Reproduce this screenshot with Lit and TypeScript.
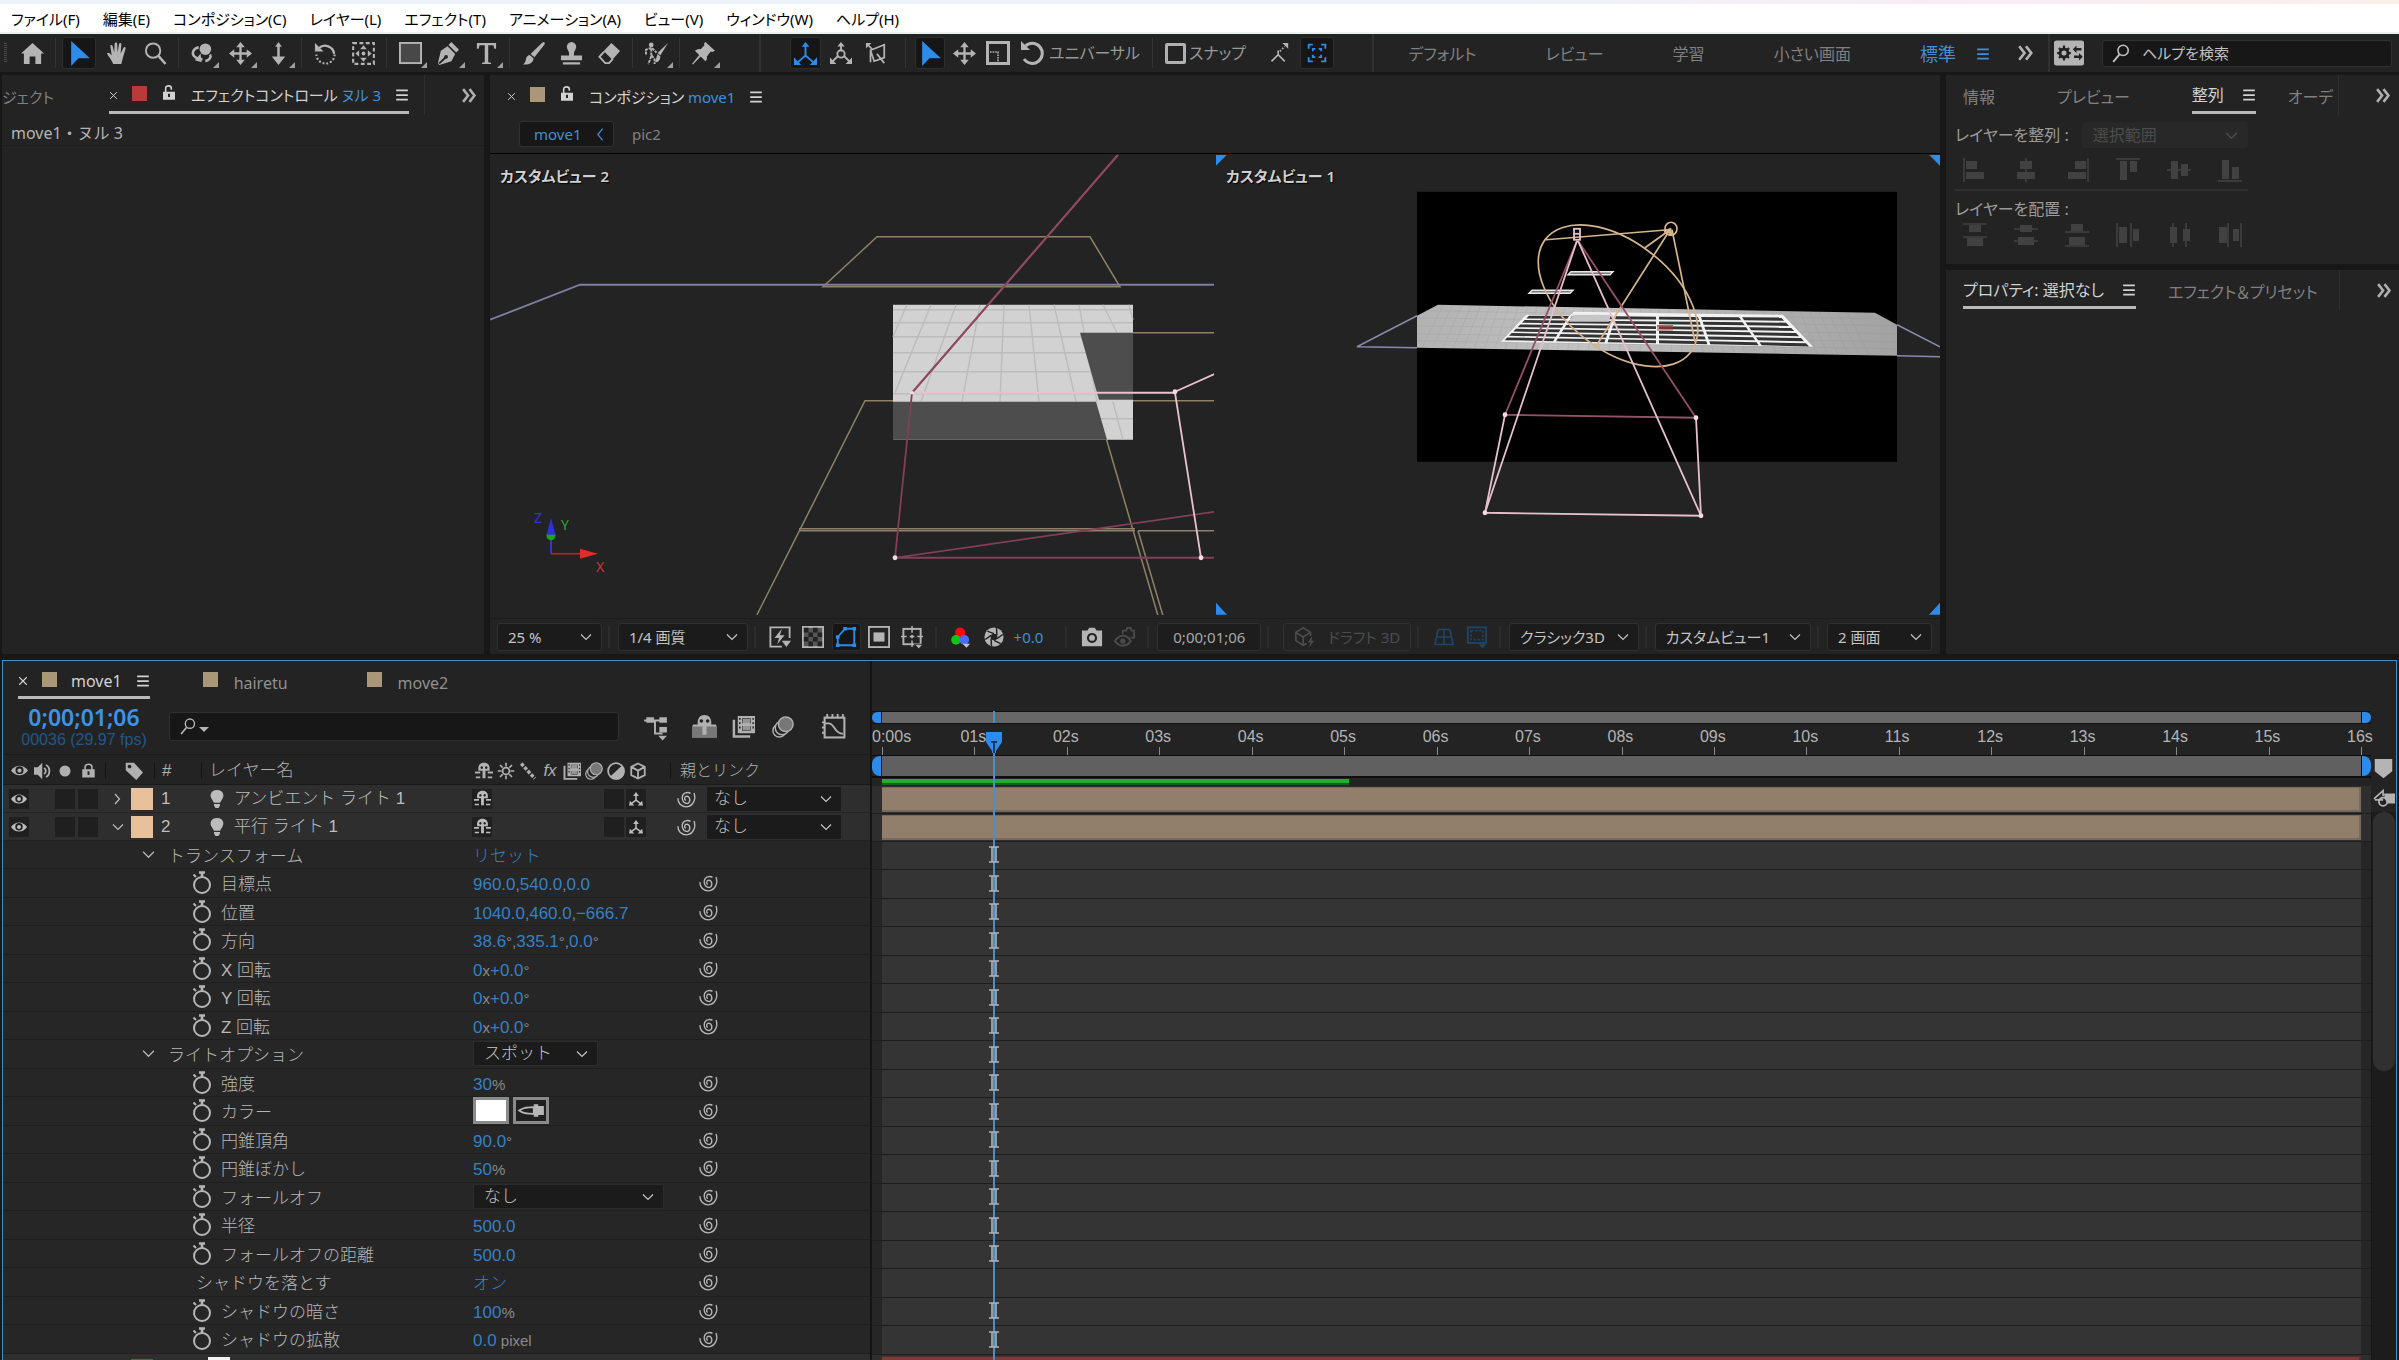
import { LitElement, html, svg, css, nothing } from "lit";
import { customElement } from "lit/decorators.js";
import { classMap } from "lit/directives/class-map.js";
import { styleMap } from "lit/directives/style-map.js";

/* ---------- icons, all drawn on a 24 x 24 grid ---------- */

const icons: Record<string, unknown> = {
  home: svg`<path fill="currentColor" d="M12 1 0 12h3v11h6v-8h6v8h6V12h3z"/>`,
  arrow: svg`<path fill="currentColor" d="M4 0v24l7-7.500h11z"/>`,
  hand: svg`<path fill="currentColor" d="M7.500 23C6 19 2 14 1 12c1-1.600 3-.6 5 2L4.500 4.500c0-2 2-2 2.500 0L8.500 11 9 2c0-2 2.600-2 2.700 0L12 11l1.600-9c.5-1.700 2.600-1.300 2.400.6L15.300 12l2.900-6c1-1.500 2.600-.7 2.200 1L17.500 17l-1.500 6z"/>`,
  zoom: svg`<circle cx="9.500" cy="9" r="7.500" fill="none" stroke="currentColor" stroke-width="2"/><path d="m15 14.500 7.500 8.500" stroke="currentColor" stroke-width="2.600"/>`,
  orbit: svg`<circle cx="15" cy="7.500" r="6" fill="currentColor"/><path d="M8 5.500C2 7 0 12 4 15.500c2 1.800 5 2.500 8 2.500M20 13c1.500 3-1 6-5 7" fill="none" stroke="currentColor" stroke-width="2.600"/><path d="m10 12 1 9-7-2z" fill="currentColor"/>`,
  pan: svg`<path d="M12 3v18M3 12h18" stroke="currentColor" stroke-width="2.400"/><path fill="currentColor" d="m12 0 4.500 5.500h-9zM12 24l4.500-5.500h-9zM0 12l5.500-4.500v9zM24 12l-5.500-4.500v9z"/>`,
  dolly: svg`<path d="M12 4v14" stroke="currentColor" stroke-width="2.600"/><path fill="currentColor" d="m12 0 3.500 5h-7zM12 24l7-9H5z"/>`,
  rotate: svg`<path d="M5 6.500a9.500 9.500 0 0 1 16 6" fill="none" stroke="currentColor" stroke-width="2.400"/><path d="M21.500 13a9.500 9.500 0 0 1-19 0" fill="none" stroke="currentColor" stroke-width="2.200" stroke-dasharray="2 2"/><path d="M1 1v9h9z" fill="currentColor"/>`,
  anchor: svg`<rect x="1.200" y="1.200" width="21.600" height="21.600" fill="none" stroke="currentColor" stroke-width="2.200" stroke-dasharray="4 2.600"/><circle cx="12" cy="12" r="2" fill="currentColor"/><path fill="currentColor" d="m12 3.500 3.500 4h-7zM12 20.500l3.500-4h-7zM3.500 12l4-3.500v7zM20.500 12l-4-3.500v7z"/>`,
  rect: svg`<rect x="1" y="1" width="22" height="21" fill="#484848" stroke="currentColor" stroke-width="2"/>`,
  pen: svg`<path fill="currentColor" fill-rule="evenodd" d="m15 0 8 8-3 3-8-8zM11 4.500l8 8-4 7.500L2.500 24 1 22.500l6.500-6.500a2 2 0 1 1 1.500 1.500L3 23 1 22 4 9z"/>`,
  type: svg`<path fill="currentColor" d="M2 1h20v6h-1.800l-1-3.500h-5.400V21l3 .6V23H7.200v-1.400l3-.6V3.500H4.800l-1 3.500H2z"/>`,
  brush: svg`<path fill="currentColor" d="M23 0c1 1 1 1.500.5 2.500L13 16l-4-3.500L21 .8zM8 13.500l4 3.500c0 5-5 7-11 6.500 3-2 2.500-4 3.500-7 .8-1.800 2-2.700 3.500-3z"/>`,
  stamp: svg`<path fill="currentColor" d="M12 0a5 5 0 0 1 4 8c-1.500 2-1.500 4-1.500 6H23v5H1v-5h8.500c0-2 0-4-1.500-6a5 5 0 0 1 4-8zM3 21h18v2.500H3z"/>`,
  eraser: svg`<path fill="currentColor" d="m14 1 9 8.500-8 9L6 9.500z"/><path d="m6.500 10-5 5.500 6 6.500h4l4-4.500" fill="none" stroke="currentColor" stroke-width="2"/>`,
  roto: svg`<circle cx="6.500" cy="3" r="2.500" fill="currentColor"/><path d="M1 13V8l6-2 5 5M6.500 7v8l-3 8M7 14l3 4v5" fill="none" stroke="currentColor" stroke-width="2" stroke-dasharray="3 1"/><path fill="currentColor" d="M24 1 16 14l-3-2.500zM13 12.500l3 2.500c0 4-2 6-5.500 6z"/>`,
  pin: svg`<path fill="currentColor" d="m14 0 10 9-3 1.500-1.500-.5-4 5c.5 2 0 3.500-1.500 5L9 15l-8 8.500L0 23l7.500-9.500L3 9c2-1.500 4-2 6-1.500l4-4-.5-2z"/>`,
  axisLocal: svg`<path d="M12 3v11M12 14l-8 7M12 14l8 7" stroke="currentColor" stroke-width="2" fill="none"/><path fill="currentColor" d="m12 0 4 5H8zM0 24v-8l7.500 8zM24 24v-8l-7.500 8z"/>`,
  axisWorld: svg`<path d="M12 3v7M9 15l-6 6M15 15l6 6" stroke="currentColor" stroke-width="2"/><circle cx="12" cy="13" r="4" fill="none" stroke="currentColor" stroke-width="2"/><path fill="currentColor" d="m12 0 4 5H8zM0 24v-7l7 7zM24 24v-7l-7 7z"/>`,
  axisView: svg`<path d="M3 3l5 5M6 9l15-6v14L10 21zM6 9v13M13 13l8 10" stroke="currentColor" stroke-width="1.900" fill="none"/><path fill="currentColor" d="M1 1v6l6-6z"/>`,
  scale: svg`<rect x="1.500" y="1.500" width="21" height="21" fill="none" stroke="currentColor" stroke-width="3"/><path d="M4 11h8v10" fill="none" stroke="currentColor" stroke-width="1.600" stroke-dasharray="1.600 1"/>`,
  undo: svg`<path d="M5 5.500A10 10 0 1 1 4 18" fill="none" stroke="currentColor" stroke-width="3"/><path d="M1 0v9h9z" fill="currentColor"/>`,
  snapArrow: svg`<path d="m3 22 8-8 8 8M11 14V9" fill="none" stroke="currentColor" stroke-width="2"/><path d="m13 10 6-6" stroke="currentColor" stroke-width="2" stroke-dasharray="2 2"/><path fill="currentColor" d="M23 0v7l-7-7z"/>`,
  feature: svg`<path d="M2 7V2h5M17 2h5v5M22 17v5h-5M7 22H2v-5M7 10V7h3M14 7h3v3M17 14v3h-3M10 17H7v-3" fill="none" stroke="currentColor" stroke-width="2.200"/>`,
  lockOpen: svg`<path d="M7 12V5c0-5 8.500-5 8.500 0v2" fill="none" stroke="currentColor" stroke-width="2.400"/><path fill="currentColor" fill-rule="evenodd" d="M3 10h18v12H3zm7.500 3h3v5h-3z"/>`,
  lock: svg`<path d="M6.500 11V6.500c0-6 11-6 11 0V11" fill="none" stroke="currentColor" stroke-width="2.600"/><path fill="currentColor" fill-rule="evenodd" d="M2 10h20v13H2zm8.500 3h3v6h-3z"/>`,
  menu: svg`<path d="M2 4h20M2 12h20M2 20h20" stroke="currentColor" stroke-width="3"/>`,
  more: svg`<path d="m3 3 7 9-7 9M12 3l7 9-7 9" fill="none" stroke="currentColor" stroke-width="3.600"/>`,
  chevDown: svg`<path d="m2 7 10 10L22 7" fill="none" stroke="currentColor" stroke-width="2.400"/>`,
  chevRight: svg`<path d="m6 2 9 10-9 10" fill="none" stroke="currentColor" stroke-width="2.400"/>`,
  chevLeft: svg`<path d="m16 1-9 11 9 11" fill="none" stroke="currentColor" stroke-width="2.200"/>`,
  close: svg`<path d="m3 3 18 18M21 3 3 21" stroke="currentColor" stroke-width="2.600"/>`,
  settings: svg`<rect x="0" y="2" width="24" height="20" rx="2" fill="currentColor"/><circle cx="8" cy="12" r="3.200" fill="none" stroke="#232323" stroke-width="2.400"/><path d="M8 6v2M8 16v2M2.500 12h2M11.500 12h2M4 8l1.500 1.500M10.500 14.500 12 16M12 8l-1.500 1.500M5.500 14.500 4 16" stroke="#232323" stroke-width="1.800"/><path d="M16 9h6M16 15h6" stroke="#232323" stroke-width="2"/><path d="m18 6-3 3 3 3zM20 12l3 3-3 3z" fill="#232323"/>`,
  find: svg`<circle cx="14" cy="8" r="6.500" fill="none" stroke="currentColor" stroke-width="2"/><path d="m9.500 13-8 9.500" stroke="currentColor" stroke-width="2.400"/>`,
  flash: svg`<path d="M14 22.500H1.500v-21h21V13" fill="none" stroke="currentColor" stroke-width="2"/><path d="m14 3-8 10h5l-2 7 8-10h-5z" fill="currentColor"/><path d="M14 16h10l-5 7z" fill="currentColor"/>`,
  checker: svg`<rect x="1" y="1" width="22" height="22" fill="#555" stroke="currentColor" stroke-width="2"/><path fill="#222" d="M2 2h5v5H2zM12 2h5v5h-5zM7 7h5v5H7zM17 7h5v5h-5zM2 12h5v5H2zM12 12h5v5h-5zM7 17h5v5H7zM17 17h5v5h-5z"/>`,
  mask: svg`<path d="M3 21V12l8-9h10v18z" fill="none" stroke="currentColor" stroke-width="2"/><path fill="currentColor" d="M1 19h4v4H1zM19 19h4v4h-4zM19 1h4v4h-4zM9 1h4v4H9zM1 10h4v4H1z"/>`,
  solid: svg`<rect x="1" y="1" width="22" height="22" fill="none" stroke="currentColor" stroke-width="2"/><rect x="6" y="7" width="12" height="10" fill="currentColor"/>`,
  guides: svg`<rect x="2.500" y="3" width="18" height="16" fill="none" stroke="currentColor" stroke-width="2"/><path d="M11.500 0v7M11.500 15v7M0 11h6M17 11h6M9 11h5M11.500 9v4" stroke="currentColor" stroke-width="1.600"/><path fill="currentColor" d="M14 19h9l-4.500 5z" stroke="#232323"/>`,
  rgb: svg`<circle cx="11" cy="6.500" r="6" fill="#f60a0a"/><circle cx="6" cy="15.500" r="5.800" fill="#14c414"/><circle cx="16" cy="15.500" r="5.800" fill="#4a6cf5"/><path fill="#c4c4c4" d="M14 20h9l-4.500 5z"/>`,
  aperture: svg`<circle cx="12" cy="12" r="11.500" fill="currentColor"/><circle cx="12" cy="12" r="4" fill="#232323"/><path d="M12 8 4 5M15.500 10 15 1M15.500 14l7-5M12 16l8 4M8.500 14 9 23M8.500 10l-7 5" stroke="#232323" stroke-width="1.800"/>`,
  camera: svg`<path fill="currentColor" fill-rule="evenodd" d="M1 5h6l2-3h6l2 3h6v17H1zm11 2.500a5.500 5.500 0 1 0 .01 0z"/><circle cx="12" cy="13" r="3.200" fill="currentColor"/>`,
  snapEye: svg`<path d="M1 16c5-8 14-8 18 0-4 7-13 7-18 0z" fill="none" stroke="currentColor" stroke-width="2.400"/><circle cx="10" cy="16" r="3" fill="currentColor"/><path d="M10 8V4h4l1-3h4l1 3h3v8h-4" fill="none" stroke="currentColor" stroke-width="2"/>`,
  cubeFlash: svg`<path d="M14 19 10 21 2 16V7l8-5 8 5v4M2 7l8 5 8-5M10 12v9" fill="none" stroke="currentColor" stroke-width="1.800"/><path d="m20 11-5 7h3l-2 6 6-8h-3z" fill="currentColor"/>`,
  gridPersp: svg`<path d="M5 3h14l4 18H1zM3 12h18M12 3v18" fill="none" stroke="currentColor" stroke-width="2"/>`,
  dashBox: svg`<rect x="2" y="1.500" width="20" height="17" fill="none" stroke="currentColor" stroke-width="2"/><rect x="5.500" y="5" width="13" height="10" fill="none" stroke="currentColor" stroke-width="1.800" stroke-dasharray="2.400 2"/><path fill="currentColor" d="M14 20h8l-4 4.500z"/>`,
  eye: svg`<path d="M0 12C6 3 18 3 24 12 18 21 6 21 0 12z" fill="currentColor"/><circle cx="12" cy="11.500" r="5.600" fill="#1f1f1f"/><circle cx="12" cy="12" r="3" fill="currentColor"/>`,
  speaker: svg`<path fill="currentColor" d="M0 7h5l6-6v22l-6-6H0z"/><path d="M13.500 8c3 2 3 6 0 8M16 4c6 3 6 13 0 16" fill="none" stroke="currentColor" stroke-width="2.400"/>`,
  dot: svg`<circle cx="12" cy="12" r="11" fill="currentColor"/>`,
  tag: svg`<path fill="currentColor" fill-rule="evenodd" d="M1 1h11l12 13-9 10L1 11zm5 2.500a2.500 2.500 0 1 0 .01 0z"/>`,
  bulb: svg`<path fill="currentColor" d="M12 0c9 0 10 8 7 12l-3 5H8l-3-5C2 8 3 0 12 0zM8 18.500h8v2l-2 3.500h-4l-2-3.500z"/>`,
  shy: svg`<path fill="currentColor" fill-rule="evenodd" d="M4.500 11.500C3.500 4 7 1 12 1s8.500 3 7.500 10.500h-5.500v10h-4v-10zM9 5.800a1.700 1.700 0 1 0 .01 0zm6 0a1.700 1.700 0 1 0 .01 0z"/><path d="M0 14h7M17 14h7M1 20.500h6M17 20.500h6" stroke="currentColor" stroke-width="2.400"/>`,
  shyBig: svg`<path fill="#777" d="M0 11h24v12H0z"/><path fill="currentColor" fill-rule="evenodd" d="M5.500 10C5 4 8 1 12 1s7 3 6.500 9H23v2h-9v8h-4v-8H1v-2zM9 5a1.700 1.700 0 1 0 .01 0zm6 0a1.700 1.700 0 1 0 .01 0z"/>`,
  sun: svg`<circle cx="12" cy="12" r="4.600" fill="none" stroke="currentColor" stroke-width="2.400"/><path d="M12 1v5M12 18v5M1 12h5M18 12h5M4 4l3.500 3.500M16.500 16.500 20 20M20 4l-3.500 3.500M7.500 16.500 4 20" stroke="currentColor" stroke-width="2.200"/>`,
  quality: svg`<path d="m3 2 18 20" stroke="currentColor" stroke-width="4.500" stroke-dasharray="4.500 2"/>`,
  frames: svg`<path fill="currentColor" fill-rule="evenodd" d="M6 1h18v18H6zm4.500 2.500v5h9v-5zm0 8v5h9v-5zM7.300 3v2h1.600V3zm0 4.500v2h1.600v-2zm0 4.500v2h1.600v-2zm14-9v2h1.500V3zm0 4.500v2h1.500v-2zm0 4.500v2h1.500v-2z"/><path d="M2 5v17.500h17" fill="none" stroke="currentColor" stroke-width="2.600"/><path fill="currentColor" d="M11 4h8v12h-8z" opacity=".8"/>`,
  blur: svg`<circle cx="8" cy="16" r="7" fill="#232323" stroke="currentColor" stroke-width="1.600"/><circle cx="11" cy="13" r="7.500" fill="#232323" stroke="currentColor" stroke-width="1.600"/><circle cx="15" cy="9" r="8" fill="#777" stroke="currentColor" stroke-width="1.600"/>`,
  adjust: svg`<circle cx="12" cy="12" r="10.500" fill="none" stroke="currentColor" stroke-width="2.400"/><path fill="currentColor" d="M20 4.500A11 11 0 1 1 4 19.500z"/>`,
  cube: svg`<path d="m12 2 9 4.500v11L12 22l-9-4.500v-11zM3 6.500l9 5 9-5M12 11.500V22" fill="none" stroke="currentColor" stroke-width="2.400"/>`,
  axisSmall: svg`<path d="M12 4v10M12 14l-8 6M12 14l8 6" stroke="currentColor" stroke-width="2.600" fill="none"/><path fill="currentColor" d="m12 0 5 7H7zM0 23l1.500-8L9 23zM24 23l-1.500-8L15 23z"/>`,
  tree: svg`<path d="M2 6h18M12 6v12h7" fill="none" stroke="currentColor" stroke-width="1.800"/><path fill="currentColor" d="M4 3h7v5H4zM16 3h7v5h-7zM16 12h7v5h-7zM15 20h8l-4 4.500z"/>`,
  graph: svg`<rect x="2.500" y="3.500" width="19" height="19" fill="none" stroke="currentColor" stroke-width="2"/><path d="M3 9h3c7 0 5 10 14 10M5 4V0M10 4V0M15 4V0M20 4V0M3 8H0M3 13H0M3 18H0" fill="none" stroke="currentColor" stroke-width="1.800"/>`,
  stopwatch: svg`<circle cx="12" cy="14" r="8" fill="none" stroke="currentColor" stroke-width="2"/><path d="M9 1.500h6M12 1.500V6" stroke="currentColor" stroke-width="2.600"/><path d="M3.500 3.500l2.500 2.500" stroke="currentColor" stroke-width="2"/>`,
  spiral: svg`<path d="M11 14.500A3 3 0 0 1 12.500 9a5 5 0 0 1 .5 9.500A7.300 7.300 0 0 1 10.500 4.800" fill="none" stroke="currentColor" stroke-width="1.700"/><path d="M10.500 4.800c3-.8 5-.5 6.500.7M21.500 5c3 8-1.500 17-9.500 17.500C5 22.500 1 17.500 1.200 11.500" fill="none" stroke="currentColor" stroke-width="1.700"/>`,
  dropper: svg`<path d="M1 12c4-3 8-3 13-3v6c-5 0-9 0-13-3z" fill="none" stroke="currentColor" stroke-width="1.500"/><path fill="currentColor" d="M14 6.500h4V8h5v8h-5v1.500h-4z"/>`,
  marker: svg`<path fill="currentColor" d="M2 1h20v14l-10 8-10-8z"/>`,
  keyNav: svg`<path d="m1 13 10-9v6M2 14h9" fill="none" stroke="currentColor" stroke-width="1.800"/><circle cx="11" cy="16" r="4.500" fill="none" stroke="currentColor" stroke-width="2"/><path fill="currentColor" d="M12 7h12v11h-8l-3-5z"/>`,
  alL: svg`<path d="M1 0v24" stroke="currentColor" stroke-width="1.600"/><path fill="currentColor" d="M3 3h11v8H3zM3 14h18v7H3z"/>`,
  alC: svg`<path d="M12 0v24" stroke="currentColor" stroke-width="1.600"/><path fill="currentColor" d="M6 3h12v8H6zM3 14h18v7H3z"/>`,
  alR: svg`<path d="M23 0v24" stroke="currentColor" stroke-width="1.600"/><path fill="currentColor" d="M10 3h11v8H10zM3 14h18v7H3z"/>`,
  alT: svg`<path d="M0 1h24" stroke="currentColor" stroke-width="1.600"/><path fill="currentColor" d="M4 3h7v19H4zM14 3h7v11h-7z"/>`,
  alM: svg`<path d="M0 12h24" stroke="currentColor" stroke-width="1.600"/><path fill="currentColor" d="M4 3h7v18H4zM14 6h7v12h-7z"/>`,
  alB: svg`<path d="M0 23h24" stroke="currentColor" stroke-width="1.600"/><path fill="currentColor" d="M4 2h7v19H4zM14 9h7v12h-7z"/>`,
  dsT: svg`<path d="M0 1h24M0 14h24" stroke="currentColor" stroke-width="1.600"/><path fill="currentColor" d="M6 2h12v7H6zM4 15h16v8H4z"/>`,
  dsM: svg`<path d="M0 6h24M0 18h24" stroke="currentColor" stroke-width="1.600"/><path fill="currentColor" d="M6 2h12v7H6zM4 14h16v8H4z"/>`,
  dsB: svg`<path d="M0 9h24M0 23h24" stroke="currentColor" stroke-width="1.600"/><path fill="currentColor" d="M6 1h12v7H6zM4 14h16v8H4z"/>`,
  dsL: svg`<path d="M1 0v24M15 0v24" stroke="currentColor" stroke-width="1.600"/><path fill="currentColor" d="M3 4h8v16H3zM17 6h6v12h-6z"/>`,
  dsC: svg`<path d="M6 0v24M19 0v24" stroke="currentColor" stroke-width="1.600"/><path fill="currentColor" d="M3 4h7v16H3zM16 6h7v12h-7z"/>`,
  dsR: svg`<path d="M10 0v24M23 0v24" stroke="currentColor" stroke-width="1.600"/><path fill="currentColor" d="M1 4h8v16H1zM15 6h6v12h-6z"/>`,
};

const icon = (name: string, size = 22) =>
  html`<svg class="ic" viewBox="0 0 24 24" width=${size} height=${size} aria-hidden="true">${icons[name]}</svg>`;

/* ---------- data ---------- */

const menus = ["ファイル(F)", "編集(E)", "コンポジション(C)", "レイヤー(L)", "エフェクト(T)", "アニメーション(A)", "ビュー(V)", "ウィンドウ(W)", "ヘルプ(H)"];

type Tool = { i: string; t: string; more?: boolean; on?: boolean };
const toolGroups: Tool[][] = [
  [{ i: "home", t: "ホーム" }],
  [{ i: "arrow", t: "選択", on: true }, { i: "hand", t: "手のひら" }, { i: "zoom", t: "ズーム" }],
  [{ i: "orbit", t: "周回", more: true }, { i: "pan", t: "パン", more: true }, { i: "dolly", t: "ドリー", more: true }],
  [{ i: "rotate", t: "回転" }, { i: "anchor", t: "アンカーポイント" }],
  [{ i: "rect", t: "長方形", more: true }, { i: "pen", t: "ペン", more: true }, { i: "type", t: "文字", more: true }],
  [{ i: "brush", t: "ブラシ" }, { i: "stamp", t: "スタンプ" }, { i: "eraser", t: "消しゴム" }],
  [{ i: "roto", t: "ロトブラシ", more: true }],
  [{ i: "pin", t: "パペットピン", more: true }],
];

type Prop = {
  name: string;
  kind?: "group" | "plain";
  value?: [string, boolean][];
  select?: { v: string; wide?: boolean };
  colour?: boolean;
  marker?: boolean;
};
const v = (s: string): [string, boolean] => [s, true];
const u = (s: string): [string, boolean] => [s, false];
const props: Prop[] = [
  { name: "トランスフォーム", kind: "group", value: [v("リセット")] },
  { name: "目標点", value: [v("960.0"), u(","), v("540.0"), u(","), v("0.0")] },
  { name: "位置", value: [v("1040.0"), u(","), v("460.0"), u(","), v("−666.7")] },
  { name: "方向", value: [v("38.6"), u("°,"), v("335.1"), u("°,"), v("0.0"), u("°")] },
  { name: "X 回転", value: [v("0"), u("x"), v("+0.0"), u("°")] },
  { name: "Y 回転", value: [v("0"), u("x"), v("+0.0"), u("°")] },
  { name: "Z 回転", value: [v("0"), u("x"), v("+0.0"), u("°")] },
  { name: "ライトオプション", kind: "group", select: { v: "スポット" } },
  { name: "強度", value: [v("30"), u("%")] },
  { name: "カラー", colour: true },
  { name: "円錐頂角", value: [v("90.0"), u("°")] },
  { name: "円錐ぼかし", value: [v("50"), u("%")] },
  { name: "フォールオフ", select: { v: "なし", wide: true } },
  { name: "半径", value: [v("500.0")] },
  { name: "フォールオフの距離", value: [v("500.0")] },
  { name: "シャドウを落とす", kind: "plain", value: [v("オン")], marker: false },
  { name: "シャドウの暗さ", value: [v("100"), u("%")] },
  { name: "シャドウの拡散", value: [v("0.0"), u(" pixel")] },
];

const layers = [
  { n: 1, name: "アンビエント ライト 1", open: false },
  { n: 2, name: "平行 ライト 1", open: true },
];

const shell = css`
  * { box-sizing: border-box; }
  .ic { display: block; flex: none; overflow: visible; }
  button, select, input { font: inherit; color: inherit; border: 0; margin: 0; padding: 0; background: none; font-feature-settings: inherit; }
  button { display: flex; align-items: center; justify-content: center; }
  select { appearance: none; outline: none; }
  .drop { display: grid; align-items: center; background: #1b1b1b; border: 1px solid #303030; border-radius: 3px; color: #c4c4c4; }
  .drop select, .drop .ic { grid-area: 1 / 1; }
  .drop select { width: 100%; height: 100%; padding-left: 10px; }
  .drop .ic { justify-self: end; margin-right: 9px; pointer-events: none; }
`;

const drop = (value: string, label: string, cls = "", size = 12) => html`
  <span class="drop ${cls}"><select aria-label=${label}><option>${value}</option></select>${icon("chevDown", size)}</span>`;

/* ---------- left-hand 3D view ---------- */

@customElement("view-perspective")
class ViewPerspective extends LitElement {
  static styles = css`
    :host { display: block; min-width: 0; overflow: hidden; }
    svg { display: block; width: 100%; height: 100%; }
    text { font: 14px "Noto Sans", sans-serif; }
  `;
  render() {
    const cols = [[907, 893, 337], [931, 895, 393], [956, 921, 402], [980, 962, 402], [1004, 1000, 402], [1029, 1039, 402], [1054, 1076, 402], [1079, 1097, 402], [1103, 1117, 333], [1129, 1133, 320]];
    return html`<svg viewBox="490 155 724 460" preserveAspectRatio="xMidYMid slice">
      <g fill="none" stroke="#8f8066" stroke-width="1.500">
        <path d="M877 237h213l30 50H823z"/>
        <path d="M893 401h-28L757 615M1133 333h82M1133 401h82M1106 438l52 178M799 529h336M799 531h336M1138 531h77M1138 531l25 85"/>
      </g>
      <path d="M490 320l90-35h635" fill="none" stroke="#7f7ea0" stroke-width="1.800"/>
      <rect x="893" y="305" width="240" height="135" fill="#d2d2d2"/>
      <g stroke="#bcbcbc" stroke-width="1.400">
        ${[310, 323, 337, 353, 372, 394].map((y) => svg`<path d="M893 ${y}h240"/>`)}
        ${cols.map((c) => svg`<path d="M${c[0]} 305L${c[1]} ${c[2]}"/>`)}
        <path d="M1098 419h35M1113 402l10 38"/>
      </g>
      <path fill="#4d4d4d" d="M893 402h203l11 38H893zM1080 333h53v67h-34z"/>
      <g fill="none" stroke="#823f59" stroke-width="1.800">
        <path d="M1118 155 912 393l-17 165 320-46M895 558h320"/>
      </g>
      <path d="M1118 155 912 393" stroke="#8f4a62" stroke-width="2"/>
      <path d="M912 393h263l26 165M1175 392l40-18" fill="none" stroke="#e8c3cf" stroke-width="1.800"/>
      <g fill="#f6dbe3"><circle cx="895" cy="558" r="2.400"/><circle cx="1175" cy="392" r="2.400"/><circle cx="1201" cy="558" r="2.400"/><circle cx="912" cy="393" r="1.800"/></g>
      <path d="M551 554v-25" stroke="#3437c8" stroke-width="2"/>
      <ellipse cx="551" cy="536" rx="4.500" ry="4.500" fill="#19a519"/>
      <path fill="#2e31d6" d="M551 518l4.500 17h-9z"/>
      <path d="M551 554h30" stroke="#a32a2a" stroke-width="1.800"/>
      <path fill="#e22b2b" d="M580 549l18 5-18 5z"/>
      <text x="534" y="523" fill="#3437c8">Z</text>
      <text x="561" y="530" fill="#2fa52f">Y</text>
      <text x="596" y="572" fill="#d23232">X</text>
    </svg>`;
  }
}

/* ---------- right-hand 3D view ---------- */

@customElement("view-camera")
class ViewCamera extends LitElement {
  static styles = css`
    :host { display: block; min-width: 0; overflow: hidden; }
    svg { display: block; width: 100%; height: 100%; }
  `;
  private cards() {
    const top = [1527, 1570, 1614, 1657, 1699, 1740, 1782];
    const bottom = [1501, 1553, 1605, 1657, 1709, 1761, 1812];
    const out: unknown[] = [];
    const edge = (c: number, t: number) => top[c] + (bottom[c] - top[c]) * t;
    for (let r = 0; r < 6; r++) {
      for (let c = 0; c < 6; c++) {
        const t0 = r / 6, t1 = (r + 0.62) / 6;
        const y = (t: number, k: number) => 316 + t * (26 + k * 0.8) + k * 0.3;
        out.push(svg`<path d="M${edge(c, t0) + 2} ${y(t0, c)}L${edge(c + 1, t0) - 1} ${y(t0, c + 1)}L${edge(c + 1, t1) - 1} ${y(t1, c + 1)}L${edge(c, t1) + 2} ${y(t1, c)}z"/>`);
      }
    }
    return out;
  }
  render() {
    return html`<svg viewBox="1216 155 724 460" preserveAspectRatio="xMidYMid slice">
      <defs><linearGradient id="floor" x1="0" x2="1"><stop offset="0" stop-color="#b2b2b2"/><stop offset=".35" stop-color="#c2c2c2"/><stop offset="1" stop-color="#a2a2a2"/></linearGradient></defs>
      <rect x="1417" y="192" width="480" height="270" fill="#000"/>
      <path fill="url(#floor)" d="M1438 305l437 8 22 12v31l-480-8v-32z"/>
      <g stroke="#8a8a8a" stroke-width=".6" opacity=".3">
        <path d="M1425 311l464 8M1417 318l480 8M1417 326l480 8M1417 334l480 8M1417 341l480 8"/>
        ${Array.from({ length: 44 }, (_, k) => svg`<path d="M${1443 + k * 9.4} ${305 + k * 0.17}L${1422 + k * 10.4} ${348 + k * 0.17}" />`)}
      </g>
      <path fill="#f2f2f2" d="M1526 315l44 1 4-4 126 2 83 1 30 32-312-5z"/>
      <g fill="#333">${this.cards()}</g>
      <path fill="#c6c6c6" d="M1573 315l38 0-2 7-40 0z"/>
      <g fill="#777" stroke="#e8e8e8" stroke-width="1.400"><path d="M1571 272h42l-3 3h-42zM1532 290.500h41l-3 3h-41z"/></g>
      <path d="M1658 326v5m2-5v5m2-5v5m2-5v5m2-5v5m2-5v5m2-5v5m2-5v5M1657 326h16" stroke="#a83c34"/>
      <g fill="none" stroke="#8a89ac" stroke-width="1.500"><path d="M1417 316l-60 31 60 1M1897 325l43 22M1897 356l43 1"/></g>
      <g fill="none" stroke="#d5b48e" stroke-width="1.700">
        <ellipse cx="1618" cy="296" rx="92" ry="54" transform="rotate(38 1618 296)"/>
        <ellipse cx="1671" cy="229" rx="6" ry="6.500"/>
        <path d="M1546 240l123-10M1645 248l25-18M1595 348l75-118M1695 342l-23-112"/>
        <path d="M1664 232l6-2 1 6" stroke-width="3"/>
      </g>
      <g fill="none" stroke="#95506a" stroke-width="1.800"><path d="M1577 241l-72 174 191 3-118-177"/></g>
      <g fill="none" stroke="#e6c0cc" stroke-width="1.800"><path d="M1577 241l-92 272 216 3-123-275M1505 415l-20 98M1696 418l5 98"/><rect x="1574" y="229" width="6" height="11"/><path d="M1574 234h6"/></g>
      <g fill="#f6dbe3"><circle cx="1505" cy="415" r="2.400"/><circle cx="1696" cy="418" r="2.400"/><circle cx="1485" cy="513" r="2.400"/><circle cx="1701" cy="516" r="2.400"/></g>
      <g fill="#2d8ceb"><path d="M1216 155h11l-11 11zM1940 155h-11l11 11zM1216 615v-12l11 12zM1940 615v-12l-11 12z"/></g>
    </svg>`;
  }
}

/* ---------- application ---------- */

@customElement("app-root")
class AppRoot extends LitElement {
  static styles = [shell, css`
    :host {
      display: flex; flex-direction: column; height: 100vh; overflow: hidden;
      background: #171717; color: #a8a8a8;
      font-family: "Noto Sans", "Noto Sans CJK JP", sans-serif; font-size: 16px; line-height: 20px;
      font-feature-settings: "palt"; white-space: nowrap;
    }
    .strip { flex: none; height: 4px; background: linear-gradient(90deg, #edf3fa 0 60%, #f7ecf6 80%, #faf0ea); }
    .menubar { flex: none; display: flex; gap: 23px; height: 30px; padding: 2px 11px 0; background: #fff; border-bottom: 2px solid #eef2ee; color: #000; font-size: 15px; }

    .toolbar { flex: none; display: flex; align-items: center; height: 38px; padding-left: 4px; background: #232323; color: #b4b4b4; }
    .grip { width: 3px; height: 20px; margin-right: 6px; background: repeating-linear-gradient(#484848 0 1px, transparent 1px 2px); }
    .tool { position: relative; width: 38px; height: 32px; flex: none; }
    .tool.slim { width: 34px; }
    .tool.on::before { content: ""; position: absolute; inset: 0 2px; z-index: 0; background: #161616; border: 1px solid #2e2e2e; border-radius: 3px; }
    .tool .ic { position: relative; }
    .tool.on { color: #2d8ceb; }
    .tool.more::after { content: ""; position: absolute; right: 2px; bottom: 1px; border: 3px solid transparent; border-right-color: #a0a0a0; border-bottom-color: #a0a0a0; }
    .sep { flex: none; width: 1px; height: 30px; margin: 0 4px; background: #333; }
    .sep.tall { height: 38px; width: 2px; background: #303030; }
    .sep.pad { margin-left: 37px; }
    .axes { display: flex; align-items: center; margin-left: 23px; }
    .axes .tool { width: 35px; }
    .gizmo { display: flex; align-items: center; margin-left: 8px; color: #b4b4b4; }
    .gizmo .sep { margin: 0 12px 0 12px; }
    .gizmo .sep:first-child { margin: 0 7px 0 4px; }
    .gizmo > span, .snap { color: #989898; }
    .snap { display: flex; align-items: center; gap: 3px; }
    .snap input { appearance: none; width: 21px; height: 21px; border: 3px solid #b0b0b0; border-radius: 2px; }
    .snapbtns { display: flex; margin-left: 14px; flex: 1; }
    .spaces { display: flex; align-items: center; gap: 69px; color: #808080; padding: 2px 27px 0 30px; }
    .spaces .cur { color: #3f8fdb; gap: 20px; font-size: 18px; }
    .morews { margin-right: 9px; }
    .help { display: flex; align-items: center; gap: 11px; width: 290px; height: 27px; margin: 0 7px 0 18px; padding-left: 9px; background: #171717; border: 1px solid #303030; border-radius: 3px; color: #c0c0c0; font-size: 15px; }
    .help input { flex: 1; min-width: 0; outline: none; }
    .help input::placeholder { color: #c0c0c0; opacity: 1; }

    .top { flex: 579 1 0; min-height: 0; display: flex; gap: 6px; margin: 3px 0 6px 2px; }
    .panel { background: #232323; min-width: 0; display: flex; flex-direction: column; }
    .left { flex: none; width: 482px; }
    .center { flex: 1; }
    .right { flex: none; width: 453px; display: flex; flex-direction: column; gap: 6px; }
    .align { flex: none; height: 189px; }
    .props { flex: 1; }

    .tabs { flex: none; display: flex; height: 40px; overflow: hidden; color: #808080; }
    .tab { flex: none; display: flex; align-items: center; gap: 14px; height: 39px; padding-top: 4px; }
    .tab.cur { color: #d2d2d2; border-bottom: 3px solid #b9b9b9; }
    .tab.bare { margin-left: 17px; color: #d2d2d2; }
    .left .tab, .tab.bare { font-size: 15px; }
    .tab b { font-weight: 400; color: #3f8fdb; }
    .swatch { width: 15px; height: 15px; background: #a99777; }
    .tabs .swatch { margin-bottom: 4px; }
    .tabs .swatch + .ic { margin-bottom: 5px; }
    .swatch.red { background: #b83a39; }
    .overflow { flex: none; margin-left: auto; height: 40px; padding: 0 6px 0 36px; border-left: 1px solid #2f2f2f; color: #b0b0b0; }
    .first { width: 45px; margin-right: 62px; justify-content: flex-start; }
    .crumb { padding: 8px 9px 0; height: 31px; border-bottom: 1px solid #1d1d1d; color: #b4b4b4; font-feature-settings: normal; font-size: 16px; }

    .comps { display: flex; align-items: flex-end; gap: 18px; height: 32px; padding-left: 29px; color: #808080; font-size: 15px; }
    .comps button { height: 26px; }
    .comps .cur { justify-content: space-between; width: 95px; padding: 0 6px 0 14px; background: #171717; border: 1px solid #303030; border-radius: 3px; color: #3f8fdb; }
    .views { flex: 1; min-height: 0; display: grid; grid-template-columns: 1fr 1fr; gap: 2px; margin-top: 6px; border-top: 1px solid #000; border-bottom: 1px solid #1b1b1b; padding: 1px 0 3px; }
    .view { position: relative; display: grid; min-height: 0; }
    .view h2 { position: absolute; left: 10px; top: 11px; margin: 0; font-size: 15px; font-weight: 600; color: #d0d0d0; text-shadow: 1px 1px 1px #000; }
    .footer { flex: none; display: flex; align-items: center; height: 35px; padding: 2px 8px 0 7px; color: #b4b4b4; font-size: 15px; }
    .footer .drop { height: 28px; }
    .footer .sep { height: 22px; margin: 0 8px 0 6px; width: 2px; background: #2c2c2c; }
    .footer .tool { width: 33px; height: 28px; }
    .footer .tool.off { color: #4a4a4a; }
    .footer .tool.deep { color: #1f4468; }
    .expo { color: #3f8fdb; margin: 0 16px 0 3px; }
    .w105 { width: 106px; } .w130 { width: 131px; } .w157 { width: 158px; }
    .box { height: 28px; border: 1px solid #303030; border-radius: 3px; background: #1d1d1d; color: #a8a8a8; }
    .box.tc { width: 105px; }
    .box.draft { width: 129px; gap: 12px; background: none; color: #4c4c4c; margin: 0 0 0 6px; }
    .fill { flex: 1; }

    .align .tabs { padding-left: 17px; gap: 62px; }
    .props .tabs { padding-left: 17px; }
    .align .tab.cur, .props .tab.cur { gap: 18px; }
    .align .tab.last { margin-left: -30px; width: 50px; justify-content: flex-start; }
    .align .overflow { margin-left: -62px; }
    .props .tab.cur { margin-right: 32px; }
    .line { display: flex; align-items: center; gap: 13px; padding-left: 9px; height: 38px; color: #9a9a9a; padding-top: 2px; }
    .line .drop { width: 166px; height: 26px; background: #282828; border-color: #282828; color: #4c4c4c; }
    .line.low { height: 24px; padding-top: 5px; }
    .icons { display: flex; gap: 27px; padding: 5px 0 5px 17px; color: #414141; }
    .rule { width: 293px; height: 2px; margin: 2px 0 3px 9px; background: #303030; }

    .timeline { flex: 700 1 0; min-height: 0; display: flex; margin: 0 2px 0 2px; border: 1px solid #3f8fcb; border-bottom: 0; background: #232323; overflow: hidden; }
    .tree { flex: none; width: 869px; border-right: 2px solid #141414; }
    .comptabs { display: flex; height: 39px; padding-left: 15px; gap: 53px; color: #909090; }
    .comptabs .tab { gap: 16px; height: 38px; padding: 6px 26px 0 0; }
    .comptabs .tab.cur { gap: 14px; color: #d2d2d2; padding: 6px 0 0; }
    .comptabs .swatch { align-self: flex-start; margin-top: 5px; }
    .bar { display: flex; align-items: center; height: 54px; }
    .clock { width: 164px; padding-right: 2px; text-align: center; padding-top: 3px; }
    .clock strong { display: block; font-size: 23px; line-height: 24px; font-weight: 600; color: #3d93e6; }
    .clock small { display: block; font: 300 16px/22px "Liberation Sans", sans-serif; color: #225789; }
    .search { display: flex; align-items: center; gap: 2px; width: 450px; height: 29px; margin-left: 2px; padding-left: 10px; background: #171717; border: 1px solid #303030; border-radius: 3px; color: #b4b4b4; }
    .search input { flex: 1; min-width: 0; outline: none; }
    .tri { border: 5px solid transparent; border-top-color: currentColor; border-bottom: 0; align-self: center; margin-top: 6px; }
    .btns { display: flex; margin-left: 16px; color: #b0b0b0; }
    .btns button { width: 39px; height: 32px; }
    .btns button:nth-child(2) { margin-left: 11px; }
    .btns button:last-child { margin-left: 13px; }

    .row { display: grid; align-items: center; grid-template-columns: 6px 20px 4px 20px 2px 20px 3px 20px 7px 26px 24px 6px 47px 26px 230px 200px 1fr; color: #bcbcbc; font: 300 17px/24px "Liberation Sans", "Noto Sans CJK JP", sans-serif; }
    .head { grid-template-columns: 6px 20px 4px 20px 2px 20px 3px 20px 7px 20px 29px 8px 39px 8px 257px 200px 1fr; height: 31px; padding-top: 3px; border-top: 1px solid #1c1c1c; border-bottom: 1px solid #1a1a1a; color: #b0b0b0; }
    .layer { height: 28px; background: #2e2e2e; border-bottom: 1px solid #232323; padding-top: 1px; }
    .c { display: grid; place-items: center; }
    .cell { display: grid; place-items: center; width: 20px; height: 20px; background: #1f1f1f; }
    .vl { border-left: 1px solid #121212; height: 16px; }
    .chip { width: 22px; height: 22px; background: #e6c19b; }
    .switches { display: grid; grid-template-columns: repeat(8, 22px); justify-items: center; align-items: center; padding-left: 7px; }
    .layer .switches { column-gap: 0; }
    .parent { display: flex; align-items: center; gap: 11px; padding-left: 13px; }
    .parent .drop { width: 134px; height: 24px; border: 0; border-radius: 0; }
    .parent .drop select { padding-left: 7px; }
    .head .parent { margin-left: 4px; padding-left: 9px; border-left: 1px solid #121212; height: 16px; font-size: 16px; }
    .prop { display: grid; align-items: center; grid-template-columns: 139px 26px 53px 252px 226px 1fr; height: 29px; background: #262626; border-bottom: 1px solid #1e1e1e; color: #b6b6b6; font: 300 17px/24px "Liberation Sans", "Noto Sans CJK JP", sans-serif; }
    .odd { height: 28px; }
    .prop .nm { grid-column: 4; }
    .prop.group .nm { grid-column: 3 / 5; }
    .prop.plain .nm { grid-column: 3 / 5; padding-left: 28px; }
    .prop .watch { grid-column: 3; justify-self: end; margin-right: 7px; }
    .prop .val { grid-column: 5; display: flex; align-items: center; gap: 4px; }
    .prop .nm, .prop .txt { padding-top: 4px; }
    .prop .sp { grid-column: 6; justify-self: start; }
    .prop .chev { grid-column: 2; justify-self: start; }
    .prop .watch, .prop .sp, .prop .nm, .prop .val, .prop .chev { grid-row: 1; }
    .num { color: #3580c4; }
    .unit { color: #8a8a8a; font-size: 15px; }
    .txt { white-space: pre; }
    .prop .drop { width: 125px; height: 25px; border-radius: 0; border-color: #2c2c2c; }
    .prop .drop.wide { width: 191px; }
    .well { width: 36px; height: 27px; border: 3px solid #8a8a8a; background: #fff; }
    .well.dark { background: #1f1f1f; }
    .chip.crimson { background: #b53434; align-self: end; }
    .chip.blank { background: #f2f2f2; }

    .time { flex: 1; min-width: 0; position: relative; display: flex; flex-direction: column; padding-top: 50px; }
    .track { flex: none; display: flex; }
    .cap { width: 10px; background: #2d8ceb; border-radius: 8px 0 0 8px; border-right: 1px solid #111; }
    .cap.r { border-radius: 0 8px 8px 0; border-right: 0; border-left: 1px solid #111; }
    .track i { flex: 1; background: #676767; }
    .nav { height: 13px; border-top: 1px solid #111; border-bottom: 1px solid #111; }
    .work { height: 23px; border-top: 1px solid #0e0e0e; border-bottom: 2px solid #0e0e0e; }
    .work i { background: #606060; }
    .ruler { flex: none; display: grid; grid-template-columns: repeat(16, 1fr) 0; height: 31px; margin: 0 10px 0 0; padding-left: 10px; color: #b4b4b4; font: 16px/26px "Liberation Sans", sans-serif; }
    .ruler span { display: grid; align-content: start; border-image: linear-gradient(transparent 72%, #8a8a8a 72%) 1; border-left: 1px solid; }
    .ruler em { font-style: normal; margin-left: -15px; }
    .ruler span:first-child em { margin-left: -11px; }
    .cache { flex: none; height: 8px; padding: 1px 10px 1px 10px; }
    .cache i { display: block; height: 6px; background: #22b02c; border-bottom: 2px solid #1a5c20; }
    .tr { flex: none; height: 29px; padding: 0 10px 0 10px; background: #262626; border-bottom: 1px solid #1e1e1e; }
    .tr.odd { height: 28px; }
    .tr i { display: block; height: 100%; background: #343434; }
    .tr.bar2 { height: 28px; padding-top: 1px; background: #2e2e2e; }
    .tr.bar2 i { height: 25px; background: #927f6b; border: 1px solid #766a60; border-width: 1px 2px 2px 0; }
    .tr.redbar i { background: #7d3a3a; border-color: #4c3030; }
    .head-pos { position: absolute; inset: 0 10px 0 10px; pointer-events: none; }
    .play { position: absolute; top: 71px; bottom: 0; left: 7.600%; width: 16px; margin-left: -8px; display: flex; flex-direction: column; align-items: center; }
    .play .stem { flex: 1; width: 2px; background: #4a8fcd; }
    .play .tick { position: absolute; top: -21px; width: 2px; height: 12px; background: #4a8fcd; }
    .beams { position: absolute; top: 109px; left: 50%; width: 10px; margin-left: -5px; display: grid; }
    .beam { height: 29px; display: grid; place-items: center; }
    .beam.odd { height: 28px; }

    .rail { flex: none; width: 25px; display: flex; flex-direction: column; align-items: center; color: #b4b4b4; padding-top: 97px; gap: 8px; }
    .scroll { flex: 1; width: 100%; background: #1c1c1c; border-left: 1px solid #171717; padding: 0 1px; margin-top: -5px; }
    .thumb { height: 259px; background: #303030; border-radius: 11px; }
  `];

  private tool(t: Tool, size = 22, cls = "") {
    const names: Record<string, boolean> = { tool: true, on: !!t.on, more: !!t.more };
    if (cls) names[cls] = true;
    return html`<button class=${classMap(names)} aria-label=${t.t}>${icon(t.i, size)}</button>`;
  }

  private toolbar() {
    return html`<div class="toolbar">
      <span class="grip"></span>
      ${toolGroups.map((g, k) => html`${k ? html`<span class="sep"></span>` : nothing}${g.map((t) => this.tool(t, t.i === "arrow" ? 25 : 23))}`)}
      <span class="sep tall pad"></span>
      <div class="axes">
        ${this.tool({ i: "axisLocal", t: "ローカル軸モード", on: true }, 23)}
        ${this.tool({ i: "axisWorld", t: "ワールド軸モード" }, 22)}
        ${this.tool({ i: "axisView", t: "ビュー軸モード" }, 22)}
      </div>
      <div class="gizmo">
        <span class="sep"></span>
        ${this.tool({ i: "arrow", t: "選択ツール", on: true }, 25, "slim")}
        ${this.tool({ i: "pan", t: "位置" }, 23, "slim")}
        ${this.tool({ i: "scale", t: "スケール" }, 24, "slim")}
        ${this.tool({ i: "undo", t: "回転" }, 24, "slim")}
        <span>ユニバーサル</span>
        <span class="sep"></span>
      </div>
      <label class="snap"><input type="checkbox">スナップ</label>
      <div class="snapbtns">
        ${this.tool({ i: "snapArrow", t: "スナップ方向" }, 20)}
        ${this.tool({ i: "feature", t: "フィーチャにスナップ", on: true }, 20)}
      </div>
      <span class="sep tall"></span>
      <div class="spaces">
        <button>デフォルト</button><button>レビュー</button><button>学習</button><button>小さい画面</button>
        <button class="cur">標準 ${icon("menu", 14)}</button>
      </div>
      <button class="morews" aria-label="その他のワークスペース">${icon("more", 18)}</button>
      <span class="sep tall"></span>
      <button aria-label="ワークスペース設定">${icon("settings", 30)}</button>
      <label class="help">${icon("find", 19)}<input aria-label="ヘルプを検索" placeholder="ヘルプを検索"></label>
    </div>`;
  }

  private footer() {
    const sep = html`<span class="sep"></span>`;
    return html`<div class="footer">
      ${drop("25 %", "拡大率", "w105")}${sep}
      ${drop("1/4 画質", "解像度", "w130")}${sep}
      ${this.tool({ i: "flash", t: "高速プレビュー" }, 22)}
      ${this.tool({ i: "checker", t: "透明グリッド" }, 22)}
      ${this.tool({ i: "mask", t: "マスクの表示", on: true }, 22)}
      ${this.tool({ i: "solid", t: "関心領域" }, 22)}
      ${this.tool({ i: "guides", t: "グリッドとガイド" }, 23)}
      ${sep}
      ${this.tool({ i: "rgb", t: "チャンネル" }, 20)}
      ${this.tool({ i: "aperture", t: "露出をリセット" }, 20)}
      <span class="expo">+0.0</span>${sep}
      ${this.tool({ i: "camera", t: "スナップショット" }, 22)}
      ${this.tool({ i: "snapEye", t: "スナップショットを表示" }, 21, "off")}
      ${sep}
      <button class="box tc">0;00;01;06</button>${sep}
      <button class="box draft">${icon("cubeFlash", 22)}ドラフト 3D</button>${sep}
      ${this.tool({ i: "gridPersp", t: "3D グラウンドプレーン" }, 20, "deep")}
      ${this.tool({ i: "dashBox", t: "拡張ビューア" }, 22, "deep")}
      <span class="fill"></span>${sep}
      ${drop("クラシック3D", "3Dレンダラー", "w130")}${sep}
      ${drop("カスタムビュー1", "3Dビュー", "w157")}${sep}
      ${drop("2 画面", "ビューのレイアウト", "w105")}
    </div>`;
  }

  private rightPanels() {
    return html`<div class="right">
      <section class="panel align">
        <div class="tabs">
          <button class="tab">情報</button><button class="tab">プレビュー</button>
          <button class="tab cur">整列 ${icon("menu", 14)}</button>
          <button class="tab last">オーデ</button>
          <button class="overflow" aria-label="その他のパネル">${icon("more", 17)}</button>
        </div>
        <div class="line">レイヤーを整列 : ${drop("選択範囲", "レイヤーを整列", "", 13)}</div>
        <div class="icons">${["alL", "alC", "alR", "alT", "alM", "alB"].map((n) => icon(n, 24))}</div>
        <div class="rule"></div>
        <div class="line low">レイヤーを配置 :</div>
        <div class="icons">${["dsT", "dsM", "dsB", "dsL", "dsC", "dsR"].map((n) => icon(n, 24))}</div>
      </section>
      <section class="panel props">
        <div class="tabs">
          <button class="tab cur">プロパティ: 選択なし ${icon("menu", 14)}</button>
          <button class="tab">エフェクト＆プリセット</button>
          <button class="overflow" aria-label="その他のパネル">${icon("more", 17)}</button>
        </div>
      </section>
    </div>`;
  }

  private propRow(p: Prop, k: number) {
    const group = p.kind === "group";
    return html`<div class=${classMap({ prop: true, odd: k % 2 === 0, group, plain: p.kind === "plain" })}>
      ${group ? html`<button class="chev" aria-label="開閉">${icon("chevDown", 13)}</button>` : nothing}
      ${p.kind ? nothing : html`<button class="watch" aria-label="アニメーション">${icon("stopwatch", 24)}</button>`}
      <span class="nm">${p.name}</span>
      <span class="val">
        ${p.value ? html`<span class="txt">${p.value.map(([t, num]) => html`<span class=${num ? "num" : "unit"}>${t}</span>`)}</span>` : nothing}
        ${p.select ? drop(p.select.v, p.name, p.select.wide ? "wide" : "") : nothing}
        ${p.colour ? html`<button class="well" aria-label="カラー"></button><button class="well dark" aria-label="スポイト">${icon("dropper", 27)}</button>` : nothing}
      </span>
      ${group ? nothing : html`<button class="sp" aria-label="ピックウイップ">${icon("spiral", 19)}</button>`}
    </div>`;
  }

  private layerRow(l: { n: number; name: string; open: boolean }) {
    return html`<div class="row layer">
      <span></span><button class="cell" aria-label="表示">${icon("eye", 16)}</button>
      <span></span><span></span><span></span><span class="cell"></span><span></span><span class="cell"></span><span></span>
      <button aria-label="開閉">${icon(l.open ? "chevDown" : "chevRight", 12)}</button>
      <span class="chip"></span><span></span><span>${l.n}</span>
      <span>${icon("bulb", 18)}</span><span>${l.name}</span>
      <span class="switches">
        <span class="cell">${icon("shy", 17)}</span><span></span><span></span><span></span><span></span><span></span>
        <span class="cell"></span><span class="cell">${icon("axisSmall", 14)}</span>
      </span>
      <span class="parent">${icon("spiral", 19)}${drop("なし", "親とリンク")}</span>
    </div>`;
  }

  private timeline() {
    return html`<section class="timeline">
      <div class="tree">
        <div class="comptabs">
          <button class="tab cur">${icon("close", 10)}<span class="swatch"></span><span>move1</span>${icon("menu", 14)}</button>
          <button class="tab"><span class="swatch"></span><span>hairetu</span></button>
          <button class="tab"><span class="swatch"></span><span>move2</span></button>
        </div>
        <div class="bar">
          <div class="clock"><strong>0;00;01;06</strong><small>00036 (29.97 fps)</small></div>
          <label class="search">${icon("find", 17)}<span class="tri"></span><input aria-label="レイヤーを検索"></label>
          <div class="btns">
            ${[["tree", 26, "フローチャート"], ["shyBig", 25, "シャイ"], ["frames", 23, "フレームブレンド"], ["blur", 22, "モーションブラー"], ["graph", 25, "グラフエディター"]].map(([n, s, t]) => html`<button aria-label=${t}>${icon(n as string, s as number)}</button>`)}
          </div>
        </div>
        <div class="row head">
          <span></span><span class="c">${icon("eye", 17)}</span>
          <span></span><span class="c">${icon("speaker", 18)}</span>
          <span></span><span class="c">${icon("dot", 12)}</span>
          <span></span><span class="c">${icon("lock", 15)}</span>
          <span></span><span class="vl"></span><span>${icon("tag", 18)}</span><span class="vl"></span>
          <span>#</span><span class="vl"></span><span>レイヤー名</span>
          <span class="switches">${["shy", "sun", "quality"].map((n) => icon(n, 18))}<i>fx</i>${["frames", "blur", "adjust", "cube"].map((n) => icon(n, 18))}</span>
          <span class="parent">親とリンク</span>
        </div>
        ${layers.map((l) => this.layerRow(l))}
        ${props.map((p, k) => this.propRow(p, k))}
        <div class="row layer"><span></span><span></span><span></span><span></span><span></span><span></span><span></span><span></span><span></span><span></span><span class="chip crimson"></span><span></span><span></span><span class="chip blank"></span></div>
      </div>
      <div class="time">
        <div class="track nav"><span class="cap"></span><i></i><span class="cap r"></span></div>
        <div class="ruler">${Array.from({ length: 17 }, (_, k) => html`<span><em>${k ? String(k).padStart(2, "0") + "s" : "0:00s"}</em></span>`)}</div>
        <div class="track work"><span class="cap"></span><i></i><span class="cap r"></span></div>
        <div class="cache"><i style=${styleMap({ width: "31.6%" })}></i></div>
        ${layers.map(() => html`<div class="tr bar2"><i></i></div>`)}
        ${props.map((_, k) => html`<div class="tr ${k % 2 === 0 ? "odd" : ""}"><i></i></div>`)}
        <div class="tr bar2 redbar"><i></i></div>
        <div class="head-pos"><div class="play">
          <span class="tick"></span>
          <svg class="ic" viewBox="0 0 16 21" width="16" height="21"><path fill="#2d8ceb" d="M0 0h16v10l-6 9v2H6v-2L0 10z"/><path d="M5 10h6M8 10v11" stroke="#163a5e" stroke-width="2"/></svg>
          <span class="stem"></span>
          <div class="beams">${props.map((p, k) => html`<span class="beam ${k % 2 === 0 ? "odd" : ""}">${p.marker === false ? nothing : html`<svg class="ic" viewBox="0 0 10 17" width="10" height="17"><path d="M0 1h10M0 16h10M3 1v15M7 1v15" stroke="#b0b4b8" stroke-width="1.600"/></svg>`}</span>`)}</div>
        </div></div>
      </div>
      <div class="rail">${icon("marker", 21)}${icon("keyNav", 22)}<div class="scroll"><div class="thumb"></div></div></div>
    </section>`;
  }

  render() {
    return html`
      <div class="strip"></div>
      <nav class="menubar">${menus.map((m) => html`<button>${m}</button>`)}</nav>
      ${this.toolbar()}
      <div class="top">
        <section class="panel left">
          <div class="tabs">
            <button class="tab first">ジェクト</button>
            <button class="tab cur">${icon("close", 9)}<span class="swatch red"></span>${icon("lockOpen", 16)}<span>エフェクトコントロール <b>ヌル 3</b></span>${icon("menu", 14)}</button>
            <button class="overflow" aria-label="その他のパネル">${icon("more", 17)}</button>
          </div>
          <div class="crumb">move1・ヌル 3</div>
        </section>
        <section class="panel center">
          <div class="tabs">
            <div class="tab bare">${icon("close", 9)}<span class="swatch"></span>${icon("lockOpen", 16)}<span>コンポジション <b>move1</b></span>${icon("menu", 14)}</div>
          </div>
          <div class="comps"><button class="cur">move1 ${icon("chevLeft", 13)}</button><button>pic2</button></div>
          <div class="views">
            <div class="view"><view-perspective></view-perspective><h2>カスタムビュー 2</h2></div>
            <div class="view"><view-camera></view-camera><h2>カスタムビュー 1</h2></div>
          </div>
          ${this.footer()}
        </section>
        ${this.rightPanels()}
      </div>
      ${this.timeline()}
    `;
  }
}
